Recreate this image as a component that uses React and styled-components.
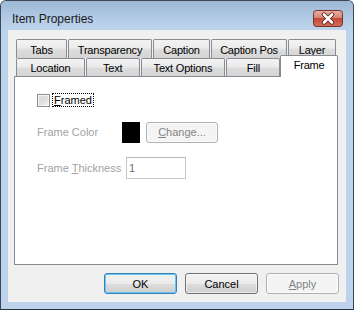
import React from "react";
import styled, { createGlobalStyle } from "styled-components";

const GlobalStyle = createGlobalStyle`
  body {
    margin: 0;
    background: #ffffff;
  }
`;

const Window = styled.div`
  width: 354px;
  height: 310px;
  box-sizing: border-box;
  border: 1px solid #3b4756;
  border-bottom-color: #1f3342;
  border-radius: 6px 6px 0 0;
  background: #bcd3eb;
  display: flex;
  flex-direction: column;
  font-family: "Liberation Sans", Arial, sans-serif;
  overflow: hidden;
`;

const TitleBar = styled.div`
  height: 29px;
  flex: none;
  box-sizing: border-box;
  display: flex;
  align-items: center;
  justify-content: space-between;
  padding: 6px 10px 0 11px;
  background: linear-gradient(#9db8d6, #b6cee8 70%, #bcd3eb);
`;

const Title = styled.span`
  font-size: 12px;
  color: #1a1a1a;
`;

const CloseButton = styled.div`
  width: 30px;
  height: 17px;
  display: flex;
`;

const Client = styled.div`
  flex: 1;
  margin: 0 7px 7px;
  background: #f0f0f0;
  padding: 9px 8px 0 6px;
  display: flex;
  flex-direction: column;
`;

const TabRow = styled.div`
  display: flex;
  align-items: flex-end;
  height: ${({ $h }) => $h}px;
  padding-left: 2px;
  gap: 1px;
`;

const Tab = styled.div`
  width: ${({ $w }) => $w}px;
  height: 100%;
  box-sizing: border-box;
  border: 1px solid #898c95;
  border-bottom: none;
  border-radius: 2px 2px 0 0;
  background: linear-gradient(#f3f3f3, #ebebeb 45%, #dcdcdc 55%, #d5d5d5);
  font-size: 11px;
  letter-spacing: -0.2px;
  color: #000;
  display: flex;
  justify-content: center;
  align-items: center;
  padding-top: 1px;
`;

const ActiveTab = styled(Tab)`
  position: relative;
  z-index: 1;
  height: 22px;
  margin-bottom: -1px;
  margin-left: -1px;
  background: #ffffff;
  align-items: flex-start;
  padding-top: 3px;
`;

const Panel = styled.div`
  height: 189px;
  box-sizing: border-box;
  border: 1px solid #898c95;
  background: #ffffff;
  padding: 16px 0 0 22px;
  display: flex;
  flex-direction: column;
  gap: 14px;
`;

const Row = styled.div`
  display: flex;
  align-items: center;
  height: ${({ $h }) => $h}px;
`;

const CheckBox = styled.div`
  width: 13px;
  height: 13px;
  box-sizing: border-box;
  border: 1px solid #8e8f8f;
  background: linear-gradient(135deg, #c9c9c9, #f4f4f4);
  box-shadow: inset 0 0 0 1px #f4f4f4, inset 1px 1px 0 2px #dedede;
`;

const CheckLabel = styled.span`
  margin-left: 2px;
  height: 14px;
  box-sizing: border-box;
  border: 1px dotted #000;
  padding: 0 1px;
  font-size: 11px;
  line-height: 12px;
  color: #000;
`;

const Label = styled.span`
  width: ${({ $w }) => $w}px;
  font-size: 11px;
  color: #a3a3a3;
`;

const Swatch = styled.div`
  width: 18px;
  height: 21px;
  background: #000;
  margin-top: 1px;
`;

const PushButton = styled.div`
  width: ${({ $w }) => $w}px;
  height: 21px;
  box-sizing: border-box;
  border: 1px solid ${({ $kind }) =>
    $kind === "default" ? "#3c7fb1" : $kind === "disabled" ? "#adb2b5" : "#707070"};
  border-radius: 3px;
  background: ${({ $kind }) =>
    $kind === "disabled"
      ? "#f4f4f4"
      : "linear-gradient(#f2f2f2, #ebebeb 50%, #dddddd 51%, #cfcfcf)"};
  box-shadow: ${({ $kind }) =>
    $kind === "default" ? "inset 0 0 0 1px #63c8f5" : "inset 0 0 0 1px rgba(255,255,255,0.6)"};
  color: ${({ $kind }) => ($kind === "disabled" ? "#838383" : "#000")};
  font-size: 11px;
  display: flex;
  align-items: center;
  justify-content: center;
  margin-left: ${({ $ml }) => $ml || 0}px;
`;

const TextInput = styled.div`
  width: 60px;
  height: 22px;
  box-sizing: border-box;
  border: 1px solid #c7c9cc;
  border-top-color: #b5b7ba;
  background: #fff;
  font-size: 11px;
  color: #6d6d6d;
  display: flex;
  align-items: center;
  padding-left: 2px;
`;

const ButtonRow = styled.div`
  display: flex;
  justify-content: flex-end;
  gap: 8px;
  margin: 8px -1px 0 0;
`;

const U = styled.span`
  text-decoration: underline;
`;

const Close = () => (
  <svg width="30" height="17" viewBox="0 0 30 17">
    <defs>
      <linearGradient id="cg" x1="0" y1="0" x2="0" y2="1">
        <stop offset="0" stopColor="#eab2a5" />
        <stop offset="0.45" stopColor="#d98474" />
        <stop offset="0.5" stopColor="#c24a35" />
        <stop offset="1" stopColor="#d0705a" />
      </linearGradient>
    </defs>
    <rect x="0.5" y="0.5" width="29" height="16" rx="3" fill="url(#cg)" stroke="#7a3128" />
    <path d="M11 4.5 L19 12.5 M19 4.5 L11 12.5" stroke="#5a231c" strokeWidth="4.4" strokeLinecap="round" />
    <path d="M11 4.5 L19 12.5 M19 4.5 L11 12.5" stroke="#ffffff" strokeWidth="2.6" strokeLinecap="round" />
  </svg>
);

const backTabs = [
  ["Tabs", 51],
  ["Transparency", 84],
  ["Caption", 57],
  ["Caption Pos", 76],
  ["Layer", 48],
];

const frontTabs = [
  ["Location", 69],
  ["Text", 54],
  ["Text Options", 85],
  ["Fill", 54],
];

const App = () => {
  return (
    <>
      <GlobalStyle />
      <Window>
        <TitleBar>
          <Title>Item Properties</Title>
          <CloseButton>
            <Close />
          </CloseButton>
        </TitleBar>
        <Client>
          <TabRow $h={19}>
            {backTabs.map(([t, w]) => (
              <Tab key={t} $w={w}>
                {t}
              </Tab>
            ))}
          </TabRow>
          <TabRow $h={18}>
            {frontTabs.map(([t, w]) => (
              <Tab key={t} $w={w}>
                {t}
              </Tab>
            ))}
            <ActiveTab $w={58}>Frame</ActiveTab>
          </TabRow>
          <Panel>
            <Row $h={14}>
              <CheckBox />
              <CheckLabel>
                <U>F</U>ramed
              </CheckLabel>
            </Row>
            <Row $h={22}>
              <Label $w={85}>Frame Color</Label>
              <Swatch />
              <PushButton $w={72} $kind="disabled" $ml={6}>
                <U>C</U>hange...
              </PushButton>
            </Row>
            <Row $h={22}>
              <Label $w={89}>
                Frame <U>T</U>hickness
              </Label>
              <TextInput>1</TextInput>
            </Row>
          </Panel>
          <ButtonRow>
            <PushButton $w={73} $kind="default">OK</PushButton>
            <PushButton $w={73}>Cancel</PushButton>
            <PushButton $w={73} $kind="disabled">
              <U>A</U>pply
            </PushButton>
          </ButtonRow>
        </Client>
      </Window>
    </>
  );
};

export default App;
